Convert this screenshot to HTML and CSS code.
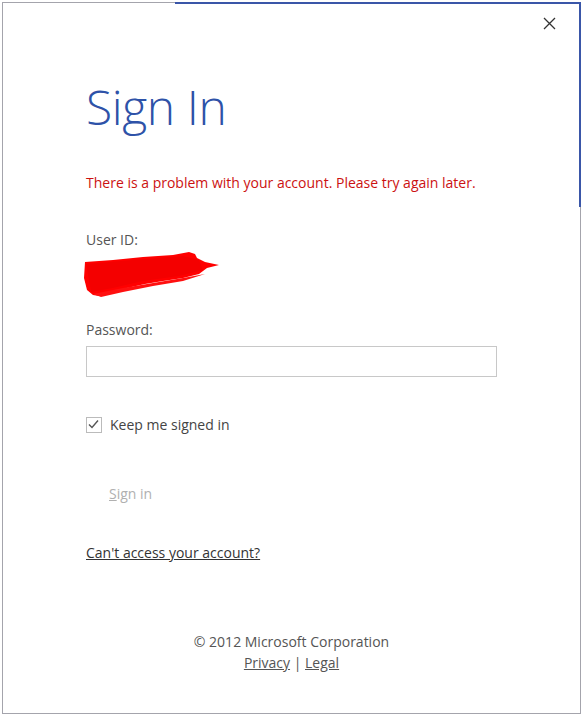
FILE: index.html
```html
<!DOCTYPE html>
<html>
<head>
    <title>Sign In</title>
    <link rel="stylesheet" href="styles.css">
</head>
<body>

<div class="dialog">
    <div class="close-row">
        <svg class="close" width="13" height="13" viewBox="0 0 13 13"><path d="M1 1 L12 12 M12 1 L1 12" stroke="#333" stroke-width="1.3" fill="none"/></svg>
    </div>

    <h1 class="title">Sign In</h1>

    <p class="error">There is a problem with your account. Please try again later.</p>

    <div class="label">User ID:</div>
    <svg class="scribble" width="140" height="52" viewBox="0 0 140 52">
        <path d="M2 12 L30 10 L60 7 L90 5 L106 2 L112 4 L114 8 L122 12 L136 15 L124 18 L116 24 L100 28 L80 31 L62 34 L44 38 L26 42 L16 46 L10 45 L4 40 L1 28 Z" fill="#ff0000"/>
        <path d="M3 14 L50 10 L100 6 L116 10 L120 20 L96 26 L60 31 L30 38 L8 42 Z" fill="#f40000"/>
        <path d="M10 44 L40 38 L70 33 L100 28 L122 24 L100 31 L70 36 L40 42 L18 47 Z" fill="#ff1010"/>
    </svg>

    <div class="label pw-label">Password:</div>
    <div class="input"></div>

    <div class="keep">
        <span class="box">
            <svg width="15" height="15" viewBox="0 0 15 15"><path d="M3 7.5 L6 10.5 L12 3.5" stroke="#555" stroke-width="1.4" fill="none"/></svg>
        </span>
        <span>Keep me signed in</span>
    </div>

    <div class="signin"><u>S</u>ign in</div>

    <a class="cant" href="#">Can't access your account?</a>

    <div class="footer">
        <div>© 2012 Microsoft Corporation</div>
        <div><a href="#">Privacy</a> | <a href="#">Legal</a></div>
    </div>
</div>

</body>
</html>
```

FILE: styles.css
```css
body {
    margin: 0; background-color: #fff; font-family: "Open Sans", "Noto Sans", sans-serif; color: #555;
}

.dialog {
    position: relative; box-sizing: border-box; margin: 2px 0 0 2px; width: 579px; height: 712px; border: 1px solid #a4a4ac; background-color: #fff; padding: 0 0 0 83px;
}

.dialog::before {
    content: ""; position: absolute; top: -1px; left: 172px; right: -1px; height: 2px; background-color: #3a56a8;
}

.dialog::after {
    content: ""; position: absolute; top: -1px; right: -1px; width: 2px; height: 205px; background-color: #3a56a8;
}

.close-row { display: flex; justify-content: flex-end; padding: 14px 24px 0 0; height: 16px;
}

.title { margin: 44px 0 0 0; font-size: 48px; font-weight: 300; color: #2e52a8; letter-spacing: -0.4px; line-height: 60px;
}

.error { margin: 36px 0 0 0; font-size: 14px; color: #cc1111; line-height: 20px;
}

.label { font-size: 14px; line-height: 20px; margin-top: 37px;
}

.scribble { display: block; margin: 0 0 0 -3px;
}

.pw-label { margin-top: 18px;
}

.input { box-sizing: border-box; width: 411px; height: 31px; border: 1px solid #c8c8c8; margin-top: 6px;
}

.keep { display: flex; align-items: center; gap: 8px; margin-top: 38px; font-size: 14px; color: #444;
}

.box { box-sizing: border-box; width: 16px; height: 16px; border: 1px solid #bbb; display: flex;
}

.box svg { margin: -1px 0 0 -1px; }

.signin { margin: 50px 0 0 23px; font-size: 14px; color: #b0b0b0;
}

.cant { display: inline-block; margin-top: 40px; font-size: 14px; color: #333;
}

.footer { position: absolute; left: 0; right: 0; top: 628px; text-align: center; font-size: 14px; line-height: 21px; color: #555;
}

.footer a { color: #555;
}
```
